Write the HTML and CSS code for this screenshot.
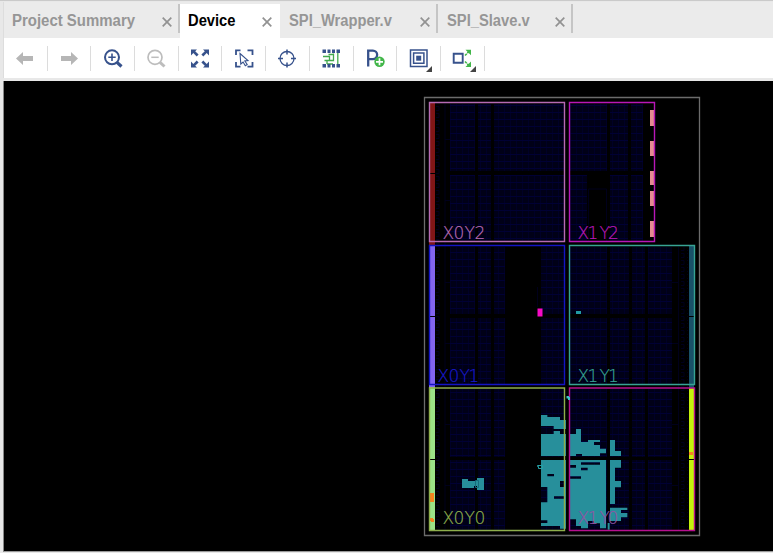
FILE: index.html
```html
<!DOCTYPE html>
<html lang="en">
<head>
<meta charset="utf-8">
<title>Device</title>
<link rel="stylesheet" href="styles.css">
</head>
<body>
<div class="window">
  <nav class="tabs">
    <div class="tab tab-summary"><span class="name">Project Summary</span><svg class="close" viewBox="0 0 10 10"><path d="M.7.7l8.6 8.6M9.3.7L.7 9.3"/></svg></div>
    <div class="tab tab-device active"><span class="name">Device</span><svg class="close" viewBox="0 0 10 10"><path d="M.7.7l8.6 8.6M9.3.7L.7 9.3"/></svg></div>
    <div class="tab tab-wrapper"><span class="name">SPI_Wrapper.v</span><svg class="close" viewBox="0 0 10 10"><path d="M.7.7l8.6 8.6M9.3.7L.7 9.3"/></svg></div>
    <div class="tab tab-slave"><span class="name">SPI_Slave.v</span><svg class="close" viewBox="0 0 10 10"><path d="M.7.7l8.6 8.6M9.3.7L.7 9.3"/></svg></div>
  </nav>
  <div class="toolbar">
    <div class="tool"><svg viewBox="0 0 24 24"><path fill="#b6b6b6" d="M3 12.500L10 6v4h10v5H10v4z"/></svg></div>
    <div class="tool"><svg viewBox="0 0 24 24"><path fill="#b6b6b6" d="M21 12.500L14 6v4H4v5h10v4z"/></svg></div>
    <div class="tool"><svg viewBox="0 0 24 24" fill="none" stroke="#37528c"><circle cx="11" cy="11.300" r="7" stroke-width="2"/><path stroke-width="1.600" d="M7.300 11.300h7.400M11 7.600V15"/><path stroke-width="3.200" d="M16 16.300l4.500 4.200"/></svg></div>
    <div class="tool"><svg viewBox="0 0 24 24" fill="none" stroke="#bdbdbd"><circle cx="11" cy="11.300" r="7" stroke-width="1.700"/><path stroke-width="1.500" d="M7.300 11.300h7.400"/><path stroke-width="3" d="M16 16.300l4.500 4.200"/></svg></div>
    <div class="tool"><svg viewBox="0 0 24 24" fill="#37528c"><path d="M3 3.500h6L7.200 5.300l3.400 3.300-1.900 1.900-3.400-3.400L3 9.500zM21 3.500h-6l1.800 1.800-3.400 3.300 1.900 1.900 3.400-3.400L21 9.500zM3 21.500h6l-1.800-1.800 3.400-3.300-1.900-1.900-3.400 3.400L3 15.500zM21 21.500h-6l1.800-1.800-3.400-3.300 1.900-1.900 3.400 3.400L21 15.500z"/></svg></div>
    <div class="tool"><svg viewBox="0 0 24 24" fill="none" stroke="#37528c"><path stroke-width="1.800" d="M4 9V4.400h4.500M15.500 4.400h5V9M20.500 16v4.600h-5M8.500 20.600H4V16"/><path fill="#fff" stroke-width="1.100" d="M8 7.500l8 7-3.200.4 2.400 3.600-1.900 1.200-2.200-3.700-2.300 2z"/></svg></div>
    <div class="tool"><svg viewBox="0 0 24 24" fill="none" stroke="#37528c"><circle cx="12" cy="12.500" r="7" stroke-width="1.300"/><path stroke-width="1.500" d="M12 3.500v5M12 16.500v5M3 12.500h5M16 12.500h5"/></svg></div>
    <div class="tool"><svg viewBox="0 0 24 24"><g fill="none" stroke="#42a84c" stroke-width="1.300"><path d="M4 10.500h6.500v4M5.500 14.500h9V7.500M14.500 8.500H9.500M8 14.500V18M18.800 6v13M8 18h6"/></g><path fill="#37528c" d="M3.500 3.500h3.500v3.500H3.500zM8.500 3.500h3v3.500h-3zM13 3.500h3v3.500h-3zM17.500 3.500h3.500v3.500h-3.500zM3.500 18h3.500v3.500H3.500zM8.500 18h3v3.500h-3zM13 18h3v3.500h-3zM17.500 18h3.500v3.500h-3.500z"/></svg></div>
    <div class="tool"><svg viewBox="0 0 24 24"><path fill="none" stroke="#37528c" stroke-width="2.300" d="M5.200 20.500V4.600h4.700a4.200 4.200 0 0 1 0 8.500H5.500"/><circle cx="16.500" cy="15.800" r="5.200" fill="#42b649"/><path stroke="#fff" stroke-width="1.700" d="M13 15.800h7M16.500 12.300v7"/></svg></div>
    <div class="tool"><svg viewBox="0 0 24 24"><path fill="none" stroke="#37528c" stroke-width="1.500" d="M3.500 4h16.500v16.500H3.500zM6.600 7h10.300v10.300H6.600z"/><path fill="#37528c" d="M9.200 9.700h5v5h-5z"/></svg><i class="more"></i></div>
    <div class="tool"><svg viewBox="0 0 24 24"><path fill="none" stroke="#37528c" stroke-width="1.900" d="M3.700 7.800h9v9h-9z"/><path fill="none" stroke="#42b649" stroke-width="1.600" stroke-dasharray="2.500 .8" d="M15 9.500l4-4M15 15.500l4 4"/><path fill="#42b649" d="M15.500 3.800H21v5.400zM15.500 21H21v-5.500z"/></svg><i class="more"></i></div>
  </div>
  <main class="canvas">
    <svg class="die" viewBox="4 81 769 470" width="769" height="470">
      <defs>
        <pattern id="cells" width="6" height="7" patternUnits="userSpaceOnUse"><path fill="#000017" d="M0 0h6v7H0z"/><path fill="#000026" d="M0 0h1v7H0z"/><path fill="#000034" d="M0 0h6v1H0z"/></pattern>
        <pattern id="io" width="7" height="7" patternUnits="userSpaceOnUse"><path fill="none" stroke="#00001c" d="M1 1.500h4v4H1"/></pattern>
      </defs>
      <path class="package" d="M424.500 97.500h275v438h-275z"/>

      <g fill="url(#cells)">
        <path d="M450 104h25v67h-25zM478 104h13v67h-13zM494 104h70v67h-70zM450 175h25v66h-25zM478 175h13v66h-13zM494 175h70v66h-70z"/>
        <path d="M570 104h37v67h-37zM610 104h18v67h-18zM631 104h12v67h-12zM570 175h17v66h-17zM610 175h18v66h-18zM631 175h12v66h-12z"/>
        <path d="M450 247h25v67h-25zM478 247h13v67h-13zM494 247h11v67h-11zM541 247h23v67h-23zM450 318h25v66h-25zM478 318h13v66h-13zM494 318h11v66h-11zM541 318h23v66h-23z"/>
        <path d="M570 247h37v67h-37zM610 247h19v67h-19zM632 247h13v67h-13zM648 247h24v67h-24zM570 318h37v66h-37zM610 318h19v66h-19zM632 318h13v66h-13zM648 318h24v66h-24z"/>
        <path d="M450 389h25v68h-25zM478 389h13v68h-13zM494 389h11v68h-11zM541 389h23v68h-23zM450 460h25v70h-25zM478 460h13v70h-13zM494 460h11v70h-11zM541 460h23v70h-23z"/>
        <path d="M570 389h37v68h-37zM610 389h19v68h-19zM632 389h13v68h-13zM648 389h24v68h-24zM570 460h37v70h-37zM610 460h19v70h-19zM632 460h13v70h-13zM648 460h24v70h-24z"/>
      </g>
      <path fill="none" stroke="#00001c" d="M588.500 241v-52h18v52M537.500 287v20M445 104v426M678.500 247v283M445 139.500h5M445 200.500h6M445 282.500h5M445 343.500h5M445 424.500h5M445 485.500h5M672 282.500h7M672 343.500h7M672 424.500h7M672 485.500h7"/>
      <path fill="url(#io)" d="M436 104h6v426h-6zM681 247h7v283h-7z"/>

      <path fill="#801617" d="M429 103h6v142h-6z"/>
      <path fill="#8264f0" d="M429 245h6v142h-6z"/>
      <path fill="#9be288" d="M429 387h6v144h-6z"/>
      <path fill="#195168" d="M689 246h5v142h-5z"/>
      <path fill="#c5f20b" d="M689 388h5v142h-5z"/>
      <path fill="#e58b91" d="M650 110h4v16h-4zM650 141h4v15h-4zM650 171h4v14h-4zM650 191h4v15h-4zM650 221h4v16h-4z"/>
      <path stroke="#000" d="M430 173.500h5M430 316.500h5M430 459.500h5M689 316.500h5M689 459.500h5"/>
      <path fill="#f5831f" d="M430 493h4v9h-4zM430 518h3v1h1v3h-3v-1h-1zM689 452h4v3h-4z"/>

      <g class="placed" transform="translate(530 380) scale(.333333)">
        <path d="M33 105h19v6h38v9h18v27H71v-9H33zM33 162h38v-9h19v9h18v66H33zM120 162h18v-15h15v39h21v-6h36v6h-18v9h18v11h18v14h-18v8h-54v-6h-18v6h-18zM240 180h15v33h18v15h-33z"/>
        <path transform="translate(0 225)" fill-rule="evenodd" d="M33 15h75v206H90v-8H33v-9h19v-8H33v-54h19V96H33zM52 57v7h20v-7zM90 78v18h14V78zM72 124v7h32v-7z"/>
        <path transform="translate(0 225)" fill-rule="evenodd" d="M120 15h108v205h-18v-15h-18v-7h-18v22h-21v-7h-15v-20h-18V71h33v-7h-33V38h18v-8h-18zM153 22v7h57v-7zM153 38v8h20v-8z"/>
        <path transform="translate(0 225)" d="M240 15h33v23h-18v40h18v19h-18v50h-15zM240 158h52v7h-19v9h19v13h-19v11h-33zM233 204h6v20h-6z"/>
      </g>
      <path class="placed" d="M462 479h6v2h6v7h-12zM474 481h3v5h-3zM477 478h7v12h-7z"/>
      <path fill="none" stroke="#176b7c" d="M475.500 480.500h3v7h-3z"/>
      <path fill="none" stroke="#25a0a5" d="M537.500 465.500h5v3h-4v-2h-1z"/>
      <path fill="#229ba5" d="M576 311h5v3h-5z"/>
      <g class="regions">
        <path stroke="#b66ab3" d="M429.500 102.500h135v139h-135z"/>
        <path stroke="#b817b7" d="M569.500 102.500h85v139h-85z"/>
        <path stroke="#1414c4" d="M429.500 245.500h135v139h-135z"/>
        <path stroke="#37a393" d="M569.500 245.500h125v139h-125z"/>
        <path stroke="#8eae4c" d="M429.500 388h135v142.500h-135z"/>
        <path stroke="#b7108f" d="M569.500 388h125v142.500h-125z"/>
      </g>
      <path fill="#3bc4c8" d="M566.500 396h2.500v1h1v3h-2v-1.500h-1.500z"/>
      <path fill="#f60ac5" d="M537.500 308.500h5v8h-5z"/>
      <g class="labels">
        <text x="442.500 453.500 464.500 474.500" y="239" fill="#b66ab3" stroke="#b66ab3">X0Y2</text>
        <text x="577.500 587.500 599.500 608" y="239" fill="#b817b7" stroke="#b817b7">X1Y2</text>
        <text x="437.500 448.500 459.500 468.500" y="381.500" fill="#1919c8" stroke="#1919c8">X0Y1</text>
        <text x="577.500 587.500 599.500 608" y="381.500" fill="#37a393" stroke="#37a393">X1Y1</text>
        <text x="442.500 453.500 464.500 474.500" y="524" fill="#8eae4c" stroke="#8eae4c">X0Y0</text>
        <text x="577.500 587.500 599.500 607.500" y="524" fill="#8f55a5" stroke="#8f55a5">X1Y0</text>
      </g>
    </svg>
  </main>
</div>
</body>
</html>
```
FILE: styles.css
```css
* { box-sizing: border-box; }
body { margin: 0; overflow: hidden; font-family: "Liberation Sans", Arial, sans-serif; background: #e6e6e6; }
.window {
  display: flex;
  flex-direction: column;
  height: 553px;
  padding: 1px 0 1px 3px;
  border-top: 1px solid #cacaca;
  background: #e8e8e8;
}
.tabs {
  display: flex;
  height: 36px;
  padding-top: 2px;
  border-left: 1px solid #ddd;
  background: #ebebeb;
}
.tab {
  position: relative;
  display: flex;
  align-items: center;
  justify-content: space-between;
  height: 34px;
  padding: 0 8px;
  color: #969696;
  font-size: 16px;
  font-weight: 700;
  white-space: nowrap;
}
.tab:not(.active)::after {
  content: "";
  position: absolute;
  right: 0;
  top: 0;
  width: 2px;
  height: 29px;
  background: #c5c5c5;
}
.tab-summary { width: 176px; }
.tab-device { width: 100px; }
.tab-wrapper { width: 158px; padding-left: 9px; }
.tab-slave { width: 135px; padding-left: 9px; padding-right: 8px; }
.active { background: #fff; color: #000; }
.name { transform: scaleX(.92); transform-origin: left; }
.tab-summary .name { transform: scaleX(.935); }
.close { flex: none; width: 10px; height: 10px; margin-top: 2px; fill: none; stroke: #929292; stroke-width: 1.7; }
.toolbar {
  display: flex;
  align-items: center;
  height: 40px;
  border-left: 1px solid #ddd;
  background: #fff;
}
.tool {
  position: relative;
  display: flex;
  align-items: center;
  justify-content: center;
  width: 43.7px;
  height: 25px;
  border-right: 1px solid #dcdcdc;
}
.tool svg { width: 24px; height: 24px; flex: none; }
.more {
  position: absolute;
  right: 8px;
  bottom: -1px;
  border-left: 6px solid transparent;
  border-bottom: 6px solid #444;
}
.canvas {
  flex: 1;
  min-height: 0;
  margin-top: 3px;
  border-left: 1px solid #888;
  border-bottom: 1px solid #999;
  background: #000;
}
.die { display: block; }
.package { fill: none; stroke: #6c6c6c; stroke-width: 1.3; }
.regions { fill: none; stroke-width: 1.4; }
.placed { fill: #278f9b; }
.labels { font-family: "DejaVu Sans Light", "DejaVu Sans", sans-serif; font-size: 17px; font-weight: 200; stroke-width: .2; }
```
